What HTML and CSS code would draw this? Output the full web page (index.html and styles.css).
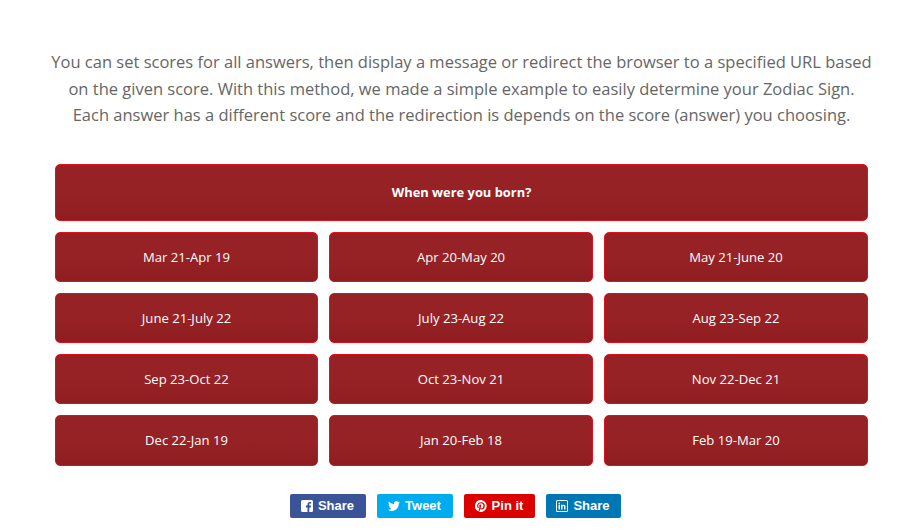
FILE: index.html
```html
<!DOCTYPE html>
<html lang="en">
<head>
<meta charset="utf-8">
<title>Zodiac Quiz</title>
<link rel="stylesheet" href="styles.css">
</head>
<body>
<main class="page">
  <p class="intro">You can set scores for all answers, then display a message or redirect the browser to a specified URL based<br>on the given score. With this method, we made a simple example to easily determine your Zodiac Sign.<br>Each answer has a different score and the redirection is depends on the score (answer) you choosing.</p>
  <div class="question">When were you born?</div>
  <div class="answers">
    <div class="answer">Mar 21-Apr 19</div>
    <div class="answer">Apr 20-May 20</div>
    <div class="answer">May 21-June 20</div>
    <div class="answer">June 21-July 22</div>
    <div class="answer">July 23-Aug 22</div>
    <div class="answer">Aug 23-Sep 22</div>
    <div class="answer">Sep 23-Oct 22</div>
    <div class="answer">Oct 23-Nov 21</div>
    <div class="answer">Nov 22-Dec 21</div>
    <div class="answer">Dec 22-Jan 19</div>
    <div class="answer">Jan 20-Feb 18</div>
    <div class="answer">Feb 19-Mar 20</div>
  </div>
  <div class="share">
    <a class="btn fb"><svg class="ico" viewBox="0 0 12 12"><path fill="#fff" fill-rule="evenodd" d="M1.5 0h9A1.5 1.5 0 0 1 12 1.5v9a1.5 1.5 0 0 1-1.5 1.5H8.300V7.400h1.500l.3-1.800H8.300V4.500c0-.5.2-.9.9-.9h1V2c-.3 0-.8-.1-1.400-.1-1.400 0-2.300.9-2.300 2.400v1.300H5v1.800h1.500V12h-5A1.500 1.500 0 0 1 0 10.500v-9A1.500 1.500 0 0 1 1.500 0z"/></svg>Share</a>
    <a class="btn tw"><svg class="ico" viewBox="0 0 24 24"><path fill="#fff" d="M24 4.600c-.9.400-1.800.7-2.800.8 1-.6 1.800-1.600 2.200-2.700-1 .6-2 1-3.100 1.200A4.900 4.900 0 0 0 11.900 8.400C7.800 8.200 4.200 6.200 1.700 3.200.4 5.400 1 8.300 3.200 9.700c-.8 0-1.600-.2-2.200-.6 0 2.300 1.600 4.400 3.900 4.900-.7.200-1.500.2-2.200.1.600 2 2.400 3.400 4.600 3.400A9.900 9.900 0 0 1 0 19.500a14 14 0 0 0 21.500-12.400c1-.7 1.800-1.500 2.500-2.500z"/></svg>Tweet</a>
    <a class="btn pin"><svg class="ico" viewBox="0 0 24 24"><path fill="#fff" d="M12 0a12 12 0 0 0-4.400 23.200c-.1-.9-.2-2.400 0-3.400l1.400-6s-.4-.7-.4-1.800c0-1.700 1-2.900 2.200-2.900 1 0 1.500.8 1.500 1.700 0 1-.7 2.600-1 4-.3 1.200.6 2.200 1.800 2.200 2.100 0 3.800-2.300 3.800-5.500 0-2.900-2.100-4.900-5-4.900a5.200 5.200 0 0 0-5.400 5.200c0 1 .4 2.100.9 2.700.1.100.1.200.1.300l-.4 1.400c0 .2-.2.300-.4.200-1.500-.7-2.400-2.900-2.400-4.700 0-3.800 2.800-7.300 8-7.300 4.200 0 7.400 3 7.400 7 0 4.200-2.600 7.500-6.300 7.500-1.200 0-2.400-.6-2.800-1.400l-.8 2.900c-.3 1.100-1 2.400-1.500 3.200A12 12 0 1 0 12 0z"/></svg>Pin it</a>
    <a class="btn li"><svg class="ico" viewBox="0 0 24 24"><path fill="#fff" fill-rule="evenodd" d="M3 0h18a3 3 0 0 1 3 3v18a3 3 0 0 1-3 3H3a3 3 0 0 1-3-3V3a3 3 0 0 1 3-3zm0 2a1 1 0 0 0-1 1v18a1 1 0 0 0 1 1h18a1 1 0 0 0 1-1V3a1 1 0 0 0-1-1H3zm2 7.500h3V19H5V9.500zM6.500 5a1.700 1.700 0 1 1 0 3.400 1.700 1.700 0 0 1 0-3.400zM10 9.500h2.800v1.300c.5-.9 1.600-1.500 2.900-1.500 2.700 0 3.300 1.800 3.300 4.200V19h-3v-4.900c0-1.200-.2-2.200-1.400-2.200-1.200 0-1.600 1-1.600 2.100v5h-3V9.500z"/></svg>Share</a>
  </div>
</main>
</body>
</html>
```
FILE: styles.css
```css
* { box-sizing: border-box; }
html, body { margin: 0; padding: 0; background: #fff; }
body { font-family: "Open Sans", sans-serif; color: #fff; height: 532px; overflow: hidden; }
.page { padding: 49px 55px 0; }
.intro {
  margin: 0 -10px 35px;
  text-align: center;
  font-size: 16.5px;
  line-height: 26.500px;
  color: #666;
  white-space: nowrap;
}
.question, .answer {
  display: flex;
  align-items: center;
  justify-content: center;
  border: 1px solid #e0101c;
  border-radius: 5px;
  background: linear-gradient(#972225 50%, #8f1d20);
  font-size: 13.100px;
}
.question { height: 57px; font-weight: 700; font-size: 12.900px; margin-bottom: 11px; }
.answers {
  display: grid;
  grid-template-columns: 263px 264px 264px;
  column-gap: 11px;
  row-gap: 11px;
}
.answer { height: 50px; }
.answer:nth-child(n+10) { height: 51px; }
.share {
  display: flex;
  justify-content: center;
  gap: 11px;
  margin-top: 28px;
  padding-right: 13px;
}
.btn {
  display: flex;
  align-items: center;
  justify-content: center;
  gap: 5px;
  height: 24px;
  border-radius: 2px;
  font-family: "Liberation Sans", sans-serif;
  font-weight: 700;
  font-size: 13px;
  color: #fff;
}
.ico { width: 12px; height: 12px; display: block; }
.fb { width: 76px; background: #3b5498; }
.tw { width: 76px; background: #00aced; }
.pin { width: 71px; background: #dc0000; }
.li { width: 75px; background: #0077b5; }
```
